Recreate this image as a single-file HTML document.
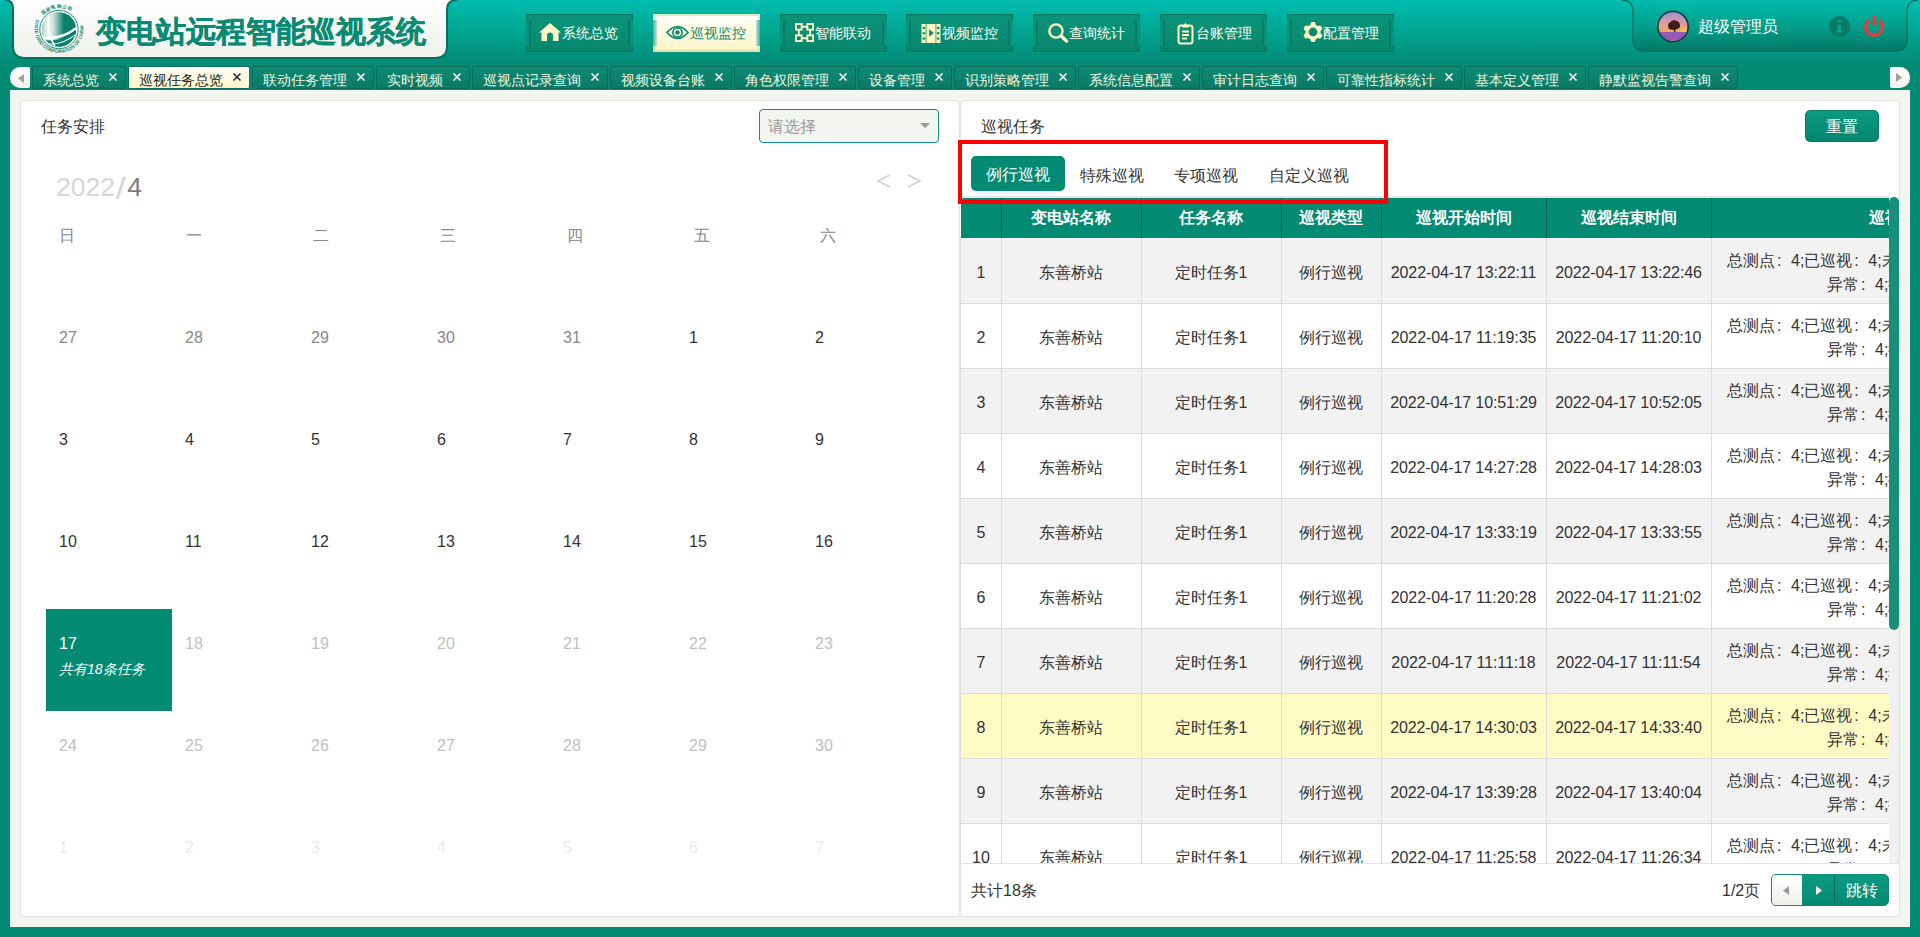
<!DOCTYPE html>
<html><head><meta charset="utf-8">
<style>
*{box-sizing:border-box;margin:0;padding:0}
html,body{width:1920px;height:937px;overflow:hidden}
body{position:relative;background:#038a72;font-family:"Liberation Sans",sans-serif;color:#333}
.abs{position:absolute}
.cl{display:inline-block;width:16px;font-weight:normal;padding-left:2px}
#hdr{left:0;top:0;width:1920px;height:66px;background:linear-gradient(#00bdb0 0px,#00a792 30px,#048b74 64px)}
.nb{position:absolute;top:14px;width:107px;height:38px;background:linear-gradient(#0a9479,#07876d);border:1px solid #087a64;box-shadow:inset 0 0 2px rgba(0,90,70,.5);color:#fffef2;font-size:14px;line-height:36px;white-space:nowrap}
.nb.on{background:linear-gradient(#fffffa,#fff5c6);border-color:#d8e8c8;color:#0b8a70}
.nb::before,.nb::after{content:"";position:absolute;top:5px;bottom:5px;width:3px}
.nb::before{left:-1px;border-right:2px solid rgba(0,90,70,.35);background:#0a9179}
.nb::after{right:-1px;border-left:2px solid rgba(0,90,70,.35);background:#0a9179}
.nb.on::before{background:linear-gradient(to right,#4fae9a,#bfe2d2);border:none;width:4px}
.nb.on::after{background:linear-gradient(to left,#4fae9a,#bfe2d2);border:none;width:4px}
.nb svg{position:absolute}
.nb span{position:absolute}
.tab{position:absolute;top:66px;height:23px;background:linear-gradient(#0d8a73,#0a7a65);border:1px solid #086c59;border-radius:2px;color:#eef6e2;font-size:14px;line-height:26px;padding-left:10px;white-space:nowrap}
.tab.on{background:linear-gradient(#fffff4,#fff6c8);border-color:#0b6e5c;color:#222}
.tab i{position:absolute;right:8px;top:6px;line-height:0;color:#fff}
.tab.on i{color:#223}
#content{left:10px;top:90px;width:1900px;height:837px;background:#f3f5f0}
.panel{position:absolute;background:#fff;border:1px solid #e2e2e2;border-radius:4px}
</style></head><body>
<div id="hdr" class="abs"></div>
<!-- logo panel -->
<svg class="abs" style="left:0;top:0" width="470" height="62" viewBox="0 0 470 62">
<defs><linearGradient id="lg" x1="0" y1="0" x2="0" y2="1"><stop offset="0" stop-color="#ffffff"/><stop offset="1" stop-color="#eef1ec"/></linearGradient>
<linearGradient id="hl" x1="0" y1="0" x2="1" y2="0"><stop offset="0" stop-color="#b0c8c0"/><stop offset="0.2" stop-color="#eef4f1"/><stop offset="0.32" stop-color="#d8e4e0"/><stop offset="0.6" stop-color="#07806c"/><stop offset="1" stop-color="#07806c"/></linearGradient></defs>
<path d="M5,0 Q13,0 13,9 L13,46 Q13,58 25,58 L435,58 Q447,58 447,46 L447,10 Q447,0 457,0 Z" fill="url(#lg)"/><path d="M5,0 Q13,0 13,9 L13,46 Q13,58 25,58 L435,58 Q447,58 447,46 L447,10 Q447,0 457,0" fill="none" stroke="#06705c" stroke-width="2"/>
<path id="rb" d="M36.3,19.3 A24.5,24.5 0 1 0 81.7,19.3" fill="none"/>
<path id="rt" d="M42.5,15.7 A21.5,21.5 0 0 1 75.5,15.7" fill="none"/>
<text font-family="Liberation Sans, sans-serif" font-size="4.8" font-weight="bold" fill="#0e8a74" letter-spacing="0"><textPath href="#rb" startOffset="0">STATE GRID CORPORATION OF CHINA</textPath></text>
<text font-family="Liberation Sans, sans-serif" font-size="4.6" font-weight="bold" fill="#0e8a74" letter-spacing="0.3"><textPath href="#rt" startOffset="0.5">国家电网公司</textPath></text>
<circle cx="59" cy="29.5" r="19.2" fill="none" stroke="#10876f" stroke-width="0.9"/>
<clipPath id="gc"><circle cx="59" cy="29.5" r="17"/></clipPath>
<g clip-path="url(#gc)">
<rect x="40" y="10" width="40" height="40" fill="#07806c"/>
<rect x="40" y="10" width="40" height="40" fill="url(#hl)"/>
<path d="M36,36 Q60,43 80,25" stroke="#ffffff" stroke-width="2.4" fill="none"/><path d="M38,38 Q60,46 80,28 L80,50 L38,50 Z" fill="#07806c"/>
<path d="M50,10 Q44,30 57,50" stroke="#ffffff" stroke-width="1.5" fill="none"/>
<path d="M40,42 Q60,49 80,31" stroke="#ffffff" stroke-width="1.1" fill="none"/>
</g>
<text x="96" y="41.5" font-family="Liberation Sans, sans-serif" font-size="30" font-weight="bold" fill="#0b8a72" stroke="#0b8a72" stroke-width="0.4">变电站远程智能巡视系统</text>
</svg>
<!-- user panel -->
<svg class="abs" style="left:1615px;top:0" width="305" height="56" viewBox="0 0 305 56">
<defs><linearGradient id="ug" x1="0" y1="0" x2="0" y2="1"><stop offset="0" stop-color="#00bbad"/><stop offset="0.5" stop-color="#02a08c"/><stop offset="1" stop-color="#047a66"/></linearGradient></defs>
<path d="M7,0 Q18,0 18,12 L18,40 Q18,51 29,51 L281,51 Q292,51 292,40 L292,12 Q292,0 303,0 Z" fill="url(#ug)"/><path d="M7,0 Q18,0 18,12 L18,40 Q18,51 29,51 L281,51 Q292,51 292,40 L292,12 Q292,0 303,0" fill="none" stroke="#067560" stroke-width="1.5"/>
</svg>
<!-- user -->
<svg class="abs" style="left:1656px;top:9px" width="34" height="34" viewBox="0 0 34 34">
<defs><linearGradient id="sky" x1="0" y1="0" x2="0" y2="1"><stop offset="0" stop-color="#8a8ccc"/><stop offset="0.3" stop-color="#c898b8"/><stop offset="0.5" stop-color="#e8a088"/><stop offset="0.68" stop-color="#f2a860"/></linearGradient><radialGradient id="sun"><stop offset="0" stop-color="#ffd84a"/><stop offset="1" stop-color="#f5b050" stop-opacity="0"/></radialGradient><clipPath id="cc"><circle cx="17" cy="17.5" r="14.3"/></clipPath></defs>
<circle cx="17" cy="17.5" r="16" fill="#163c46"/>
<g clip-path="url(#cc)"><rect x="0" y="0" width="34" height="34" fill="url(#sky)"/><ellipse cx="29" cy="22" rx="9" ry="5" fill="url(#sun)"/><path d="M12.5,19 Q11,14.5 14.5,13 Q16,10.5 19.5,11.5 Q23.5,12 24,16 Q24.5,19.5 21,20 Q18,21.5 15.5,20.5 Q13,20.5 12.5,19 Z" fill="#3e1e1a"/><rect x="18" y="19.5" width="1.4" height="4" fill="#3e1e1a"/><rect x="0" y="23" width="34" height="11" fill="#9858b8"/></g>
</svg>
<div class="abs" style="left:1698px;top:17px;font-size:16px;line-height:20px;color:#fff;white-space:nowrap">超级管理员</div>
<svg class="abs" style="left:1829px;top:16px" width="21" height="21" viewBox="0 0 21 21"><circle cx="10.5" cy="10.5" r="10.5" fill="#0a7a68"/><circle cx="10.5" cy="5.5" r="1.8" fill="#02a58e"/><path d="M8,9 H12 V15 H13.5 V16.5 H7.5 V15 H9 V10.5 H8 Z" fill="#02a58e"/></svg>
<svg class="abs" style="left:1863px;top:15px" width="22" height="22" viewBox="0 0 22 22"><path d="M6.2,5.2 A8.3,8.3 0 1 0 15.8,5.2" fill="none" stroke="#f0363c" stroke-width="3.2"/><path d="M11,1.5 V9.5" stroke="#f0363c" stroke-width="3" stroke-linecap="round"/></svg>
<!-- nav -->
<div class="nb" style="left:526px"><svg style="left:12px;top:8px" width="22" height="19" viewBox="0 0 22 19"><path d="M11,0 L22,9.5 L19.5,9.5 L19.5,18 L14,18 L14,12.5 A3,3 0 0 0 8,12.5 L8,18 L2.5,18 L2.5,9.5 L0,9.5 Z" fill="#fff8c4"/></svg><span style="left:35px">系统总览</span></div>
<div class="nb on" style="left:653px"><svg style="left:12px;top:9px" width="23" height="17" viewBox="0 0 23 17"><path d="M1,8.5 Q11.5,-3.5 22,8.5 Q11.5,20.5 1,8.5 Z" fill="none" stroke="#0b8a70" stroke-width="1.7"/><circle cx="11.5" cy="8.5" r="4.6" fill="none" stroke="#0b8a70" stroke-width="1.7"/><circle cx="11.5" cy="8.5" r="2.3" fill="#0b8a70"/></svg><span style="left:36px">巡视监控</span></div>
<div class="nb" style="left:780px"><svg style="left:14px;top:8px" width="19" height="19" viewBox="0 0 20 20"><g fill="none" stroke="#fff8c4" stroke-width="2"><rect x="1" y="1" width="6" height="6"/><rect x="13" y="1" width="6" height="6"/><rect x="1" y="13" width="6" height="6"/><rect x="13" y="13" width="6" height="6"/><path d="M7,4 H13 M7,16 H13 M4,7 V13 M16,7 V13"/></g></svg><span style="left:34px">智能联动</span></div>
<div class="nb" style="left:906px"><svg style="left:14px;top:9px" width="20" height="19" viewBox="0 0 20 20"><path d="M0,0 H20 V20 H0 Z" fill="#fff8c4"/><g fill="#0a8c72"><rect x="1.2" y="3" width="2.6" height="2.2"/><rect x="1.2" y="8.6" width="2.6" height="2.2"/><rect x="1.2" y="14.2" width="2.6" height="2.2"/><rect x="16.2" y="3" width="2.6" height="2.2"/><rect x="16.2" y="8.6" width="2.6" height="2.2"/><rect x="16.2" y="14.2" width="2.6" height="2.2"/><rect x="4.4" y="0" width="0.8" height="20"/><rect x="14.8" y="0" width="0.8" height="20"/><path d="M8,5.5 L13,9.5 L8,13.5 Z"/></g></svg><span style="left:35px">视频监控</span></div>
<div class="nb" style="left:1033px"><svg style="left:14px;top:8px" width="21" height="20" viewBox="0 0 21 20"><circle cx="8" cy="8" r="6.6" fill="none" stroke="#fff8c4" stroke-width="2.4"/><path d="M12.8,12.8 L18.5,18" stroke="#fff8c4" stroke-width="3.4" stroke-linecap="round"/></svg><span style="left:35px">查询统计</span></div>
<div class="nb" style="left:1160px"><svg style="left:16px;top:7px" width="17" height="23" viewBox="0 0 17 23"><rect x="1.5" y="3.5" width="14" height="18" rx="2.5" fill="none" stroke="#fff8c4" stroke-width="2"/><path d="M5,5.5 L6,3 H7 L8.5,0.5 L10,3 H11 L12,5.5 Z" fill="#fff8c4"/><path d="M5,9.5 H12 M5,13 H12 M5,16.5 H10" stroke="#fff8c4" stroke-width="1.8"/></svg><span style="left:35px">台账管理</span></div>
<div class="nb" style="left:1287px"><svg style="left:15px;top:7px" width="20" height="20" viewBox="0 0 21 21"><g fill="#fff8c4"><circle cx="10.5" cy="10.5" r="8"/><rect x="7.8" y="0" width="5.4" height="21" rx="2"/><rect x="7.8" y="0" width="5.4" height="21" rx="2" transform="rotate(60 10.5 10.5)"/><rect x="7.8" y="0" width="5.4" height="21" rx="2" transform="rotate(120 10.5 10.5)"/></g><circle cx="10.5" cy="10.5" r="4.6" fill="#0a8c72"/></svg><span style="left:35px">配置管理</span></div>
<div class="tab" style="left:32px;width:94px">系统总览<i><svg width="8" height="8" viewBox="0 0 8 8"><path d="M0.5,0.5 L7.5,7.5 M7.5,0.5 L0.5,7.5" stroke="currentColor" stroke-width="1.5"/></svg></i></div>
<div class="tab on" style="left:128px;width:122px">巡视任务总览<i><svg width="8" height="8" viewBox="0 0 8 8"><path d="M0.5,0.5 L7.5,7.5 M7.5,0.5 L0.5,7.5" stroke="currentColor" stroke-width="1.5"/></svg></i></div>
<div class="tab" style="left:252px;width:122px">联动任务管理<i><svg width="8" height="8" viewBox="0 0 8 8"><path d="M0.5,0.5 L7.5,7.5 M7.5,0.5 L0.5,7.5" stroke="currentColor" stroke-width="1.5"/></svg></i></div>
<div class="tab" style="left:376px;width:94px">实时视频<i><svg width="8" height="8" viewBox="0 0 8 8"><path d="M0.5,0.5 L7.5,7.5 M7.5,0.5 L0.5,7.5" stroke="currentColor" stroke-width="1.5"/></svg></i></div>
<div class="tab" style="left:472px;width:136px">巡视点记录查询<i><svg width="8" height="8" viewBox="0 0 8 8"><path d="M0.5,0.5 L7.5,7.5 M7.5,0.5 L0.5,7.5" stroke="currentColor" stroke-width="1.5"/></svg></i></div>
<div class="tab" style="left:610px;width:122px">视频设备台账<i><svg width="8" height="8" viewBox="0 0 8 8"><path d="M0.5,0.5 L7.5,7.5 M7.5,0.5 L0.5,7.5" stroke="currentColor" stroke-width="1.5"/></svg></i></div>
<div class="tab" style="left:734px;width:122px">角色权限管理<i><svg width="8" height="8" viewBox="0 0 8 8"><path d="M0.5,0.5 L7.5,7.5 M7.5,0.5 L0.5,7.5" stroke="currentColor" stroke-width="1.5"/></svg></i></div>
<div class="tab" style="left:858px;width:94px">设备管理<i><svg width="8" height="8" viewBox="0 0 8 8"><path d="M0.5,0.5 L7.5,7.5 M7.5,0.5 L0.5,7.5" stroke="currentColor" stroke-width="1.5"/></svg></i></div>
<div class="tab" style="left:954px;width:122px">识别策略管理<i><svg width="8" height="8" viewBox="0 0 8 8"><path d="M0.5,0.5 L7.5,7.5 M7.5,0.5 L0.5,7.5" stroke="currentColor" stroke-width="1.5"/></svg></i></div>
<div class="tab" style="left:1078px;width:122px">系统信息配置<i><svg width="8" height="8" viewBox="0 0 8 8"><path d="M0.5,0.5 L7.5,7.5 M7.5,0.5 L0.5,7.5" stroke="currentColor" stroke-width="1.5"/></svg></i></div>
<div class="tab" style="left:1202px;width:122px">审计日志查询<i><svg width="8" height="8" viewBox="0 0 8 8"><path d="M0.5,0.5 L7.5,7.5 M7.5,0.5 L0.5,7.5" stroke="currentColor" stroke-width="1.5"/></svg></i></div>
<div class="tab" style="left:1326px;width:136px">可靠性指标统计<i><svg width="8" height="8" viewBox="0 0 8 8"><path d="M0.5,0.5 L7.5,7.5 M7.5,0.5 L0.5,7.5" stroke="currentColor" stroke-width="1.5"/></svg></i></div>
<div class="tab" style="left:1464px;width:122px">基本定义管理<i><svg width="8" height="8" viewBox="0 0 8 8"><path d="M0.5,0.5 L7.5,7.5 M7.5,0.5 L0.5,7.5" stroke="currentColor" stroke-width="1.5"/></svg></i></div>
<div class="tab" style="left:1588px;width:150px">静默监视告警查询<i><svg width="8" height="8" viewBox="0 0 8 8"><path d="M0.5,0.5 L7.5,7.5 M7.5,0.5 L0.5,7.5" stroke="currentColor" stroke-width="1.5"/></svg></i></div>
<div class="abs" style="left:10px;top:67px;width:20px;height:21px;background:linear-gradient(#ffffff,#f0f1ec);border-radius:10px 2px 2px 10px"><svg class="abs" style="left:7.5px;top:6.5px" width="6" height="9"><path d="M6,0 V9 L0,4.5 Z" fill="#a0a0a0"/></svg></div>
<div class="abs" style="left:1890px;top:67px;width:20px;height:21px;background:linear-gradient(#ffffff,#f0f1ec);border-radius:2px 10px 10px 2px"><svg class="abs" style="left:6px;top:6px" width="6" height="9"><path d="M0,0 V9 L6,4.5 Z" fill="#a0a0a0"/></svg></div>
<div id="content" class="abs"></div>
<div class="panel" style="left:20px;top:100px;width:940px;height:817px"></div>
<div class="panel" style="left:960px;top:100px;width:940px;height:817px"></div>
<div class="abs" style="left:41px;top:117px;font-size:16px;line-height:20px;color:#333">任务安排</div>
<div class="abs" style="left:759px;top:109px;width:180px;height:34px;border:1.5px solid #10907a;border-radius:4px;background:#f3f5f0"><span class="abs" style="left:8px;top:7px;font-size:16px;line-height:20px;color:#999">请选择</span><svg class="abs" style="left:160px;top:13px" width="10" height="6"><path d="M0,0 H10 L5,5 Z" fill="#999"/></svg></div>
<div class="abs" style="left:56px;top:170px;font-size:26.5px;line-height:34px;color:#d6d6d6;white-space:nowrap">2022<span style="display:inline-block;margin:0 3px 0 2px;transform:translateY(2.5px) scale(1.4,1.1);transform-origin:50% 60%">/</span><span style="color:#7d7d7d">4</span></div>
<svg class="abs" style="left:876px;top:174px" width="48" height="15"><path d="M14,1 L2,7 L14,13" fill="none" stroke="#d0d0d0" stroke-width="1.6"/><path d="M32,1 L44,7 L32,13" fill="none" stroke="#d0d0d0" stroke-width="1.6"/></svg>
<div class="abs" style="left:47.0px;width:40px;text-align:center;top:226px;font-size:16px;line-height:20px;color:#888">日</div>
<div class="abs" style="left:173.9px;width:40px;text-align:center;top:226px;font-size:16px;line-height:20px;color:#888">一</div>
<div class="abs" style="left:300.8px;width:40px;text-align:center;top:226px;font-size:16px;line-height:20px;color:#888">二</div>
<div class="abs" style="left:427.7px;width:40px;text-align:center;top:226px;font-size:16px;line-height:20px;color:#888">三</div>
<div class="abs" style="left:554.6px;width:40px;text-align:center;top:226px;font-size:16px;line-height:20px;color:#888">四</div>
<div class="abs" style="left:681.5px;width:40px;text-align:center;top:226px;font-size:16px;line-height:20px;color:#888">五</div>
<div class="abs" style="left:808.4px;width:40px;text-align:center;top:226px;font-size:16px;line-height:20px;color:#888">六</div>
<div class="abs" style="left:46px;top:609px;width:126px;height:102px;background:#038a72"></div>
<div class="abs" style="left:59px;top:328px;font-size:16px;line-height:20px;color:#888">27</div>
<div class="abs" style="left:185px;top:328px;font-size:16px;line-height:20px;color:#888">28</div>
<div class="abs" style="left:311px;top:328px;font-size:16px;line-height:20px;color:#888">29</div>
<div class="abs" style="left:437px;top:328px;font-size:16px;line-height:20px;color:#888">30</div>
<div class="abs" style="left:563px;top:328px;font-size:16px;line-height:20px;color:#888">31</div>
<div class="abs" style="left:689px;top:328px;font-size:16px;line-height:20px;color:#333">1</div>
<div class="abs" style="left:815px;top:328px;font-size:16px;line-height:20px;color:#333">2</div>
<div class="abs" style="left:59px;top:430px;font-size:16px;line-height:20px;color:#333">3</div>
<div class="abs" style="left:185px;top:430px;font-size:16px;line-height:20px;color:#333">4</div>
<div class="abs" style="left:311px;top:430px;font-size:16px;line-height:20px;color:#333">5</div>
<div class="abs" style="left:437px;top:430px;font-size:16px;line-height:20px;color:#333">6</div>
<div class="abs" style="left:563px;top:430px;font-size:16px;line-height:20px;color:#333">7</div>
<div class="abs" style="left:689px;top:430px;font-size:16px;line-height:20px;color:#333">8</div>
<div class="abs" style="left:815px;top:430px;font-size:16px;line-height:20px;color:#333">9</div>
<div class="abs" style="left:59px;top:532px;font-size:16px;line-height:20px;color:#333">10</div>
<div class="abs" style="left:185px;top:532px;font-size:16px;line-height:20px;color:#333">11</div>
<div class="abs" style="left:311px;top:532px;font-size:16px;line-height:20px;color:#333">12</div>
<div class="abs" style="left:437px;top:532px;font-size:16px;line-height:20px;color:#333">13</div>
<div class="abs" style="left:563px;top:532px;font-size:16px;line-height:20px;color:#333">14</div>
<div class="abs" style="left:689px;top:532px;font-size:16px;line-height:20px;color:#333">15</div>
<div class="abs" style="left:815px;top:532px;font-size:16px;line-height:20px;color:#333">16</div>
<div class="abs" style="left:59px;top:634px;font-size:16px;line-height:20px;color:#fff">17</div>
<div class="abs" style="left:185px;top:634px;font-size:16px;line-height:20px;color:#c0c0c0">18</div>
<div class="abs" style="left:311px;top:634px;font-size:16px;line-height:20px;color:#c0c0c0">19</div>
<div class="abs" style="left:437px;top:634px;font-size:16px;line-height:20px;color:#c0c0c0">20</div>
<div class="abs" style="left:563px;top:634px;font-size:16px;line-height:20px;color:#c0c0c0">21</div>
<div class="abs" style="left:689px;top:634px;font-size:16px;line-height:20px;color:#c0c0c0">22</div>
<div class="abs" style="left:815px;top:634px;font-size:16px;line-height:20px;color:#c0c0c0">23</div>
<div class="abs" style="left:59px;top:736px;font-size:16px;line-height:20px;color:#c0c0c0">24</div>
<div class="abs" style="left:185px;top:736px;font-size:16px;line-height:20px;color:#c0c0c0">25</div>
<div class="abs" style="left:311px;top:736px;font-size:16px;line-height:20px;color:#c0c0c0">26</div>
<div class="abs" style="left:437px;top:736px;font-size:16px;line-height:20px;color:#c0c0c0">27</div>
<div class="abs" style="left:563px;top:736px;font-size:16px;line-height:20px;color:#c0c0c0">28</div>
<div class="abs" style="left:689px;top:736px;font-size:16px;line-height:20px;color:#c0c0c0">29</div>
<div class="abs" style="left:815px;top:736px;font-size:16px;line-height:20px;color:#c0c0c0">30</div>
<div class="abs" style="left:59px;top:838px;font-size:16px;line-height:20px;color:#ececec">1</div>
<div class="abs" style="left:185px;top:838px;font-size:16px;line-height:20px;color:#ececec">2</div>
<div class="abs" style="left:311px;top:838px;font-size:16px;line-height:20px;color:#ececec">3</div>
<div class="abs" style="left:437px;top:838px;font-size:16px;line-height:20px;color:#ececec">4</div>
<div class="abs" style="left:563px;top:838px;font-size:16px;line-height:20px;color:#ececec">5</div>
<div class="abs" style="left:689px;top:838px;font-size:16px;line-height:20px;color:#ececec">6</div>
<div class="abs" style="left:815px;top:838px;font-size:16px;line-height:20px;color:#ececec">7</div>
<div class="abs" style="left:59px;top:659px;font-size:14px;line-height:20px;color:#fff;font-style:italic;white-space:nowrap">共有18条任务</div>
<div class="abs" style="left:981px;top:117px;font-size:16px;line-height:20px;color:#333">巡视任务</div>
<div class="abs" style="left:1805px;top:110px;width:74px;height:32px;border-radius:5px;background:linear-gradient(#0a9a80,#058570);border:1px solid #067c66;color:#fff;font-size:16px;line-height:32px;text-align:center">重置</div>
<div class="abs" style="left:971px;top:156px;width:94px;height:35px;border-radius:5px;background:#038a72;color:#fff;font-size:16px;line-height:38px;text-align:center">例行巡视</div>
<div class="abs" style="left:1080px;top:165px;font-size:16px;line-height:22px;color:#333;white-space:nowrap">特殊巡视</div>
<div class="abs" style="left:1174px;top:165px;font-size:16px;line-height:22px;color:#333;white-space:nowrap">专项巡视</div>
<div class="abs" style="left:1269px;top:165px;font-size:16px;line-height:22px;color:#333;white-space:nowrap">自定义巡视</div>
<div class="abs" style="left:960px;top:196px;width:929px;height:667px;overflow:hidden;background:#fff">
<div class="abs" style="left:0;top:0;width:929px;height:2px;background:#e6e6ea"></div>
<div class="abs" style="left:1px;top:2px;width:1200px;height:40px;background:#038a72;border-top-left-radius:3px"></div>
<div class="abs" style="left:1px;top:2px;width:40px;height:40px;line-height:40px;text-align:center;color:#fff;font-weight:bold;font-size:16px"></div>
<div class="abs" style="left:41px;top:2px;width:1px;height:40px;background:#0a5e4e"></div>
<div class="abs" style="left:41px;top:2px;width:140px;height:40px;line-height:40px;text-align:center;color:#fff;font-weight:bold;font-size:16px">变电站名称</div>
<div class="abs" style="left:181px;top:2px;width:1px;height:40px;background:#0a5e4e"></div>
<div class="abs" style="left:181px;top:2px;width:140px;height:40px;line-height:40px;text-align:center;color:#fff;font-weight:bold;font-size:16px">任务名称</div>
<div class="abs" style="left:321px;top:2px;width:1px;height:40px;background:#0a5e4e"></div>
<div class="abs" style="left:321px;top:2px;width:100px;height:40px;line-height:40px;text-align:center;color:#fff;font-weight:bold;font-size:16px">巡视类型</div>
<div class="abs" style="left:421px;top:2px;width:1px;height:40px;background:#0a5e4e"></div>
<div class="abs" style="left:421px;top:2px;width:165px;height:40px;line-height:40px;text-align:center;color:#fff;font-weight:bold;font-size:16px">巡视开始时间</div>
<div class="abs" style="left:586px;top:2px;width:1px;height:40px;background:#0a5e4e"></div>
<div class="abs" style="left:586px;top:2px;width:165px;height:40px;line-height:40px;text-align:center;color:#fff;font-weight:bold;font-size:16px">巡视结束时间</div>
<div class="abs" style="left:751px;top:2px;width:1px;height:40px;background:#0a5e4e"></div>
<div class="abs" style="left:751px;top:2px;width:380px;height:40px;line-height:40px;text-align:center;color:#fff;font-weight:bold;font-size:16px">巡视结果</div>
<div class="abs" style="left:1px;top:42px;width:1200px;height:65px;background:#f2f2f2"></div>
<div class="abs" style="left:1px;top:44px;width:40px;height:65px;line-height:65px;text-align:center;font-size:16px;color:#333;white-space:nowrap">1</div>
<div class="abs" style="left:41px;top:44px;width:140px;height:65px;line-height:65px;text-align:center;font-size:16px;color:#333;white-space:nowrap">东善桥站</div>
<div class="abs" style="left:181px;top:44px;width:140px;height:65px;line-height:65px;text-align:center;font-size:16px;color:#333;white-space:nowrap">定时任务1</div>
<div class="abs" style="left:321px;top:44px;width:100px;height:65px;line-height:65px;text-align:center;font-size:16px;color:#333;white-space:nowrap">例行巡视</div>
<div class="abs" style="left:421px;top:44px;width:165px;height:65px;line-height:65px;text-align:center;font-size:16px;color:#333;white-space:nowrap;letter-spacing:-0.1px">2022-04-17 13:22:11</div>
<div class="abs" style="left:586px;top:44px;width:165px;height:65px;line-height:65px;text-align:center;font-size:16px;color:#333;white-space:nowrap;letter-spacing:-0.1px">2022-04-17 13:22:46</div>
<div class="abs" style="left:767px;top:53px;font-size:16px;line-height:24px;color:#333;white-space:nowrap">总测点<b class="cl">:</b>4;已巡视<b class="cl">:</b>4;未巡视<b class="cl">:</b>0;正常<b class="cl">:</b>0;</div>
<div class="abs" style="left:867px;top:77px;font-size:16px;line-height:24px;color:#333;white-space:nowrap">异常<b class="cl">:</b>4;待确认<b class="cl">:</b>0;</div>
<div class="abs" style="left:1px;top:107px;width:1200px;height:65px;background:#ffffff"></div>
<div class="abs" style="left:1px;top:109px;width:40px;height:65px;line-height:65px;text-align:center;font-size:16px;color:#333;white-space:nowrap">2</div>
<div class="abs" style="left:41px;top:109px;width:140px;height:65px;line-height:65px;text-align:center;font-size:16px;color:#333;white-space:nowrap">东善桥站</div>
<div class="abs" style="left:181px;top:109px;width:140px;height:65px;line-height:65px;text-align:center;font-size:16px;color:#333;white-space:nowrap">定时任务1</div>
<div class="abs" style="left:321px;top:109px;width:100px;height:65px;line-height:65px;text-align:center;font-size:16px;color:#333;white-space:nowrap">例行巡视</div>
<div class="abs" style="left:421px;top:109px;width:165px;height:65px;line-height:65px;text-align:center;font-size:16px;color:#333;white-space:nowrap;letter-spacing:-0.1px">2022-04-17 11:19:35</div>
<div class="abs" style="left:586px;top:109px;width:165px;height:65px;line-height:65px;text-align:center;font-size:16px;color:#333;white-space:nowrap;letter-spacing:-0.1px">2022-04-17 11:20:10</div>
<div class="abs" style="left:767px;top:118px;font-size:16px;line-height:24px;color:#333;white-space:nowrap">总测点<b class="cl">:</b>4;已巡视<b class="cl">:</b>4;未巡视<b class="cl">:</b>0;正常<b class="cl">:</b>0;</div>
<div class="abs" style="left:867px;top:142px;font-size:16px;line-height:24px;color:#333;white-space:nowrap">异常<b class="cl">:</b>4;待确认<b class="cl">:</b>0;</div>
<div class="abs" style="left:1px;top:172px;width:1200px;height:65px;background:#f2f2f2"></div>
<div class="abs" style="left:1px;top:174px;width:40px;height:65px;line-height:65px;text-align:center;font-size:16px;color:#333;white-space:nowrap">3</div>
<div class="abs" style="left:41px;top:174px;width:140px;height:65px;line-height:65px;text-align:center;font-size:16px;color:#333;white-space:nowrap">东善桥站</div>
<div class="abs" style="left:181px;top:174px;width:140px;height:65px;line-height:65px;text-align:center;font-size:16px;color:#333;white-space:nowrap">定时任务1</div>
<div class="abs" style="left:321px;top:174px;width:100px;height:65px;line-height:65px;text-align:center;font-size:16px;color:#333;white-space:nowrap">例行巡视</div>
<div class="abs" style="left:421px;top:174px;width:165px;height:65px;line-height:65px;text-align:center;font-size:16px;color:#333;white-space:nowrap;letter-spacing:-0.1px">2022-04-17 10:51:29</div>
<div class="abs" style="left:586px;top:174px;width:165px;height:65px;line-height:65px;text-align:center;font-size:16px;color:#333;white-space:nowrap;letter-spacing:-0.1px">2022-04-17 10:52:05</div>
<div class="abs" style="left:767px;top:183px;font-size:16px;line-height:24px;color:#333;white-space:nowrap">总测点<b class="cl">:</b>4;已巡视<b class="cl">:</b>4;未巡视<b class="cl">:</b>0;正常<b class="cl">:</b>0;</div>
<div class="abs" style="left:867px;top:207px;font-size:16px;line-height:24px;color:#333;white-space:nowrap">异常<b class="cl">:</b>4;待确认<b class="cl">:</b>0;</div>
<div class="abs" style="left:1px;top:237px;width:1200px;height:65px;background:#ffffff"></div>
<div class="abs" style="left:1px;top:239px;width:40px;height:65px;line-height:65px;text-align:center;font-size:16px;color:#333;white-space:nowrap">4</div>
<div class="abs" style="left:41px;top:239px;width:140px;height:65px;line-height:65px;text-align:center;font-size:16px;color:#333;white-space:nowrap">东善桥站</div>
<div class="abs" style="left:181px;top:239px;width:140px;height:65px;line-height:65px;text-align:center;font-size:16px;color:#333;white-space:nowrap">定时任务1</div>
<div class="abs" style="left:321px;top:239px;width:100px;height:65px;line-height:65px;text-align:center;font-size:16px;color:#333;white-space:nowrap">例行巡视</div>
<div class="abs" style="left:421px;top:239px;width:165px;height:65px;line-height:65px;text-align:center;font-size:16px;color:#333;white-space:nowrap;letter-spacing:-0.1px">2022-04-17 14:27:28</div>
<div class="abs" style="left:586px;top:239px;width:165px;height:65px;line-height:65px;text-align:center;font-size:16px;color:#333;white-space:nowrap;letter-spacing:-0.1px">2022-04-17 14:28:03</div>
<div class="abs" style="left:767px;top:248px;font-size:16px;line-height:24px;color:#333;white-space:nowrap">总测点<b class="cl">:</b>4;已巡视<b class="cl">:</b>4;未巡视<b class="cl">:</b>0;正常<b class="cl">:</b>0;</div>
<div class="abs" style="left:867px;top:272px;font-size:16px;line-height:24px;color:#333;white-space:nowrap">异常<b class="cl">:</b>4;待确认<b class="cl">:</b>0;</div>
<div class="abs" style="left:1px;top:302px;width:1200px;height:65px;background:#f2f2f2"></div>
<div class="abs" style="left:1px;top:304px;width:40px;height:65px;line-height:65px;text-align:center;font-size:16px;color:#333;white-space:nowrap">5</div>
<div class="abs" style="left:41px;top:304px;width:140px;height:65px;line-height:65px;text-align:center;font-size:16px;color:#333;white-space:nowrap">东善桥站</div>
<div class="abs" style="left:181px;top:304px;width:140px;height:65px;line-height:65px;text-align:center;font-size:16px;color:#333;white-space:nowrap">定时任务1</div>
<div class="abs" style="left:321px;top:304px;width:100px;height:65px;line-height:65px;text-align:center;font-size:16px;color:#333;white-space:nowrap">例行巡视</div>
<div class="abs" style="left:421px;top:304px;width:165px;height:65px;line-height:65px;text-align:center;font-size:16px;color:#333;white-space:nowrap;letter-spacing:-0.1px">2022-04-17 13:33:19</div>
<div class="abs" style="left:586px;top:304px;width:165px;height:65px;line-height:65px;text-align:center;font-size:16px;color:#333;white-space:nowrap;letter-spacing:-0.1px">2022-04-17 13:33:55</div>
<div class="abs" style="left:767px;top:313px;font-size:16px;line-height:24px;color:#333;white-space:nowrap">总测点<b class="cl">:</b>4;已巡视<b class="cl">:</b>4;未巡视<b class="cl">:</b>0;正常<b class="cl">:</b>0;</div>
<div class="abs" style="left:867px;top:337px;font-size:16px;line-height:24px;color:#333;white-space:nowrap">异常<b class="cl">:</b>4;待确认<b class="cl">:</b>0;</div>
<div class="abs" style="left:1px;top:367px;width:1200px;height:65px;background:#ffffff"></div>
<div class="abs" style="left:1px;top:369px;width:40px;height:65px;line-height:65px;text-align:center;font-size:16px;color:#333;white-space:nowrap">6</div>
<div class="abs" style="left:41px;top:369px;width:140px;height:65px;line-height:65px;text-align:center;font-size:16px;color:#333;white-space:nowrap">东善桥站</div>
<div class="abs" style="left:181px;top:369px;width:140px;height:65px;line-height:65px;text-align:center;font-size:16px;color:#333;white-space:nowrap">定时任务1</div>
<div class="abs" style="left:321px;top:369px;width:100px;height:65px;line-height:65px;text-align:center;font-size:16px;color:#333;white-space:nowrap">例行巡视</div>
<div class="abs" style="left:421px;top:369px;width:165px;height:65px;line-height:65px;text-align:center;font-size:16px;color:#333;white-space:nowrap;letter-spacing:-0.1px">2022-04-17 11:20:28</div>
<div class="abs" style="left:586px;top:369px;width:165px;height:65px;line-height:65px;text-align:center;font-size:16px;color:#333;white-space:nowrap;letter-spacing:-0.1px">2022-04-17 11:21:02</div>
<div class="abs" style="left:767px;top:378px;font-size:16px;line-height:24px;color:#333;white-space:nowrap">总测点<b class="cl">:</b>4;已巡视<b class="cl">:</b>4;未巡视<b class="cl">:</b>0;正常<b class="cl">:</b>0;</div>
<div class="abs" style="left:867px;top:402px;font-size:16px;line-height:24px;color:#333;white-space:nowrap">异常<b class="cl">:</b>4;待确认<b class="cl">:</b>0;</div>
<div class="abs" style="left:1px;top:432px;width:1200px;height:65px;background:#f2f2f2"></div>
<div class="abs" style="left:1px;top:434px;width:40px;height:65px;line-height:65px;text-align:center;font-size:16px;color:#333;white-space:nowrap">7</div>
<div class="abs" style="left:41px;top:434px;width:140px;height:65px;line-height:65px;text-align:center;font-size:16px;color:#333;white-space:nowrap">东善桥站</div>
<div class="abs" style="left:181px;top:434px;width:140px;height:65px;line-height:65px;text-align:center;font-size:16px;color:#333;white-space:nowrap">定时任务1</div>
<div class="abs" style="left:321px;top:434px;width:100px;height:65px;line-height:65px;text-align:center;font-size:16px;color:#333;white-space:nowrap">例行巡视</div>
<div class="abs" style="left:421px;top:434px;width:165px;height:65px;line-height:65px;text-align:center;font-size:16px;color:#333;white-space:nowrap;letter-spacing:-0.1px">2022-04-17 11:11:18</div>
<div class="abs" style="left:586px;top:434px;width:165px;height:65px;line-height:65px;text-align:center;font-size:16px;color:#333;white-space:nowrap;letter-spacing:-0.1px">2022-04-17 11:11:54</div>
<div class="abs" style="left:767px;top:443px;font-size:16px;line-height:24px;color:#333;white-space:nowrap">总测点<b class="cl">:</b>4;已巡视<b class="cl">:</b>4;未巡视<b class="cl">:</b>0;正常<b class="cl">:</b>0;</div>
<div class="abs" style="left:867px;top:467px;font-size:16px;line-height:24px;color:#333;white-space:nowrap">异常<b class="cl">:</b>4;待确认<b class="cl">:</b>0;</div>
<div class="abs" style="left:1px;top:497px;width:1200px;height:65px;background:#fffbc4"></div>
<div class="abs" style="left:1px;top:499px;width:40px;height:65px;line-height:65px;text-align:center;font-size:16px;color:#333;white-space:nowrap">8</div>
<div class="abs" style="left:41px;top:499px;width:140px;height:65px;line-height:65px;text-align:center;font-size:16px;color:#333;white-space:nowrap">东善桥站</div>
<div class="abs" style="left:181px;top:499px;width:140px;height:65px;line-height:65px;text-align:center;font-size:16px;color:#333;white-space:nowrap">定时任务1</div>
<div class="abs" style="left:321px;top:499px;width:100px;height:65px;line-height:65px;text-align:center;font-size:16px;color:#333;white-space:nowrap">例行巡视</div>
<div class="abs" style="left:421px;top:499px;width:165px;height:65px;line-height:65px;text-align:center;font-size:16px;color:#333;white-space:nowrap;letter-spacing:-0.1px">2022-04-17 14:30:03</div>
<div class="abs" style="left:586px;top:499px;width:165px;height:65px;line-height:65px;text-align:center;font-size:16px;color:#333;white-space:nowrap;letter-spacing:-0.1px">2022-04-17 14:33:40</div>
<div class="abs" style="left:767px;top:508px;font-size:16px;line-height:24px;color:#333;white-space:nowrap">总测点<b class="cl">:</b>4;已巡视<b class="cl">:</b>4;未巡视<b class="cl">:</b>0;正常<b class="cl">:</b>0;</div>
<div class="abs" style="left:867px;top:532px;font-size:16px;line-height:24px;color:#333;white-space:nowrap">异常<b class="cl">:</b>4;待确认<b class="cl">:</b>0;</div>
<div class="abs" style="left:1px;top:562px;width:1200px;height:65px;background:#f2f2f2"></div>
<div class="abs" style="left:1px;top:564px;width:40px;height:65px;line-height:65px;text-align:center;font-size:16px;color:#333;white-space:nowrap">9</div>
<div class="abs" style="left:41px;top:564px;width:140px;height:65px;line-height:65px;text-align:center;font-size:16px;color:#333;white-space:nowrap">东善桥站</div>
<div class="abs" style="left:181px;top:564px;width:140px;height:65px;line-height:65px;text-align:center;font-size:16px;color:#333;white-space:nowrap">定时任务1</div>
<div class="abs" style="left:321px;top:564px;width:100px;height:65px;line-height:65px;text-align:center;font-size:16px;color:#333;white-space:nowrap">例行巡视</div>
<div class="abs" style="left:421px;top:564px;width:165px;height:65px;line-height:65px;text-align:center;font-size:16px;color:#333;white-space:nowrap;letter-spacing:-0.1px">2022-04-17 13:39:28</div>
<div class="abs" style="left:586px;top:564px;width:165px;height:65px;line-height:65px;text-align:center;font-size:16px;color:#333;white-space:nowrap;letter-spacing:-0.1px">2022-04-17 13:40:04</div>
<div class="abs" style="left:767px;top:573px;font-size:16px;line-height:24px;color:#333;white-space:nowrap">总测点<b class="cl">:</b>4;已巡视<b class="cl">:</b>4;未巡视<b class="cl">:</b>0;正常<b class="cl">:</b>0;</div>
<div class="abs" style="left:867px;top:597px;font-size:16px;line-height:24px;color:#333;white-space:nowrap">异常<b class="cl">:</b>4;待确认<b class="cl">:</b>0;</div>
<div class="abs" style="left:1px;top:627px;width:1200px;height:65px;background:#ffffff"></div>
<div class="abs" style="left:1px;top:629px;width:40px;height:65px;line-height:65px;text-align:center;font-size:16px;color:#333;white-space:nowrap">10</div>
<div class="abs" style="left:41px;top:629px;width:140px;height:65px;line-height:65px;text-align:center;font-size:16px;color:#333;white-space:nowrap">东善桥站</div>
<div class="abs" style="left:181px;top:629px;width:140px;height:65px;line-height:65px;text-align:center;font-size:16px;color:#333;white-space:nowrap">定时任务1</div>
<div class="abs" style="left:321px;top:629px;width:100px;height:65px;line-height:65px;text-align:center;font-size:16px;color:#333;white-space:nowrap">例行巡视</div>
<div class="abs" style="left:421px;top:629px;width:165px;height:65px;line-height:65px;text-align:center;font-size:16px;color:#333;white-space:nowrap;letter-spacing:-0.1px">2022-04-17 11:25:58</div>
<div class="abs" style="left:586px;top:629px;width:165px;height:65px;line-height:65px;text-align:center;font-size:16px;color:#333;white-space:nowrap;letter-spacing:-0.1px">2022-04-17 11:26:34</div>
<div class="abs" style="left:767px;top:638px;font-size:16px;line-height:24px;color:#333;white-space:nowrap">总测点<b class="cl">:</b>4;已巡视<b class="cl">:</b>4;未巡视<b class="cl">:</b>0;正常<b class="cl">:</b>0;</div>
<div class="abs" style="left:867px;top:662px;font-size:16px;line-height:24px;color:#333;white-space:nowrap">异常<b class="cl">:</b>4;待确认<b class="cl">:</b>0;</div>
<div class="abs" style="left:41px;top:42px;width:1px;height:650px;background:#dcdcdc"></div>
<div class="abs" style="left:181px;top:42px;width:1px;height:650px;background:#dcdcdc"></div>
<div class="abs" style="left:321px;top:42px;width:1px;height:650px;background:#dcdcdc"></div>
<div class="abs" style="left:421px;top:42px;width:1px;height:650px;background:#dcdcdc"></div>
<div class="abs" style="left:586px;top:42px;width:1px;height:650px;background:#dcdcdc"></div>
<div class="abs" style="left:751px;top:42px;width:1px;height:650px;background:#dcdcdc"></div>
<div class="abs" style="left:0;top:42px;width:1px;height:650px;background:#dcdcdc"></div><div class="abs" style="left:1px;top:107px;width:1200px;height:1px;background:#dcdcdc"></div><div class="abs" style="left:1px;top:172px;width:1200px;height:1px;background:#dcdcdc"></div><div class="abs" style="left:1px;top:237px;width:1200px;height:1px;background:#dcdcdc"></div><div class="abs" style="left:1px;top:302px;width:1200px;height:1px;background:#dcdcdc"></div><div class="abs" style="left:1px;top:367px;width:1200px;height:1px;background:#dcdcdc"></div><div class="abs" style="left:1px;top:432px;width:1200px;height:1px;background:#dcdcdc"></div><div class="abs" style="left:1px;top:497px;width:1200px;height:1px;background:#dcdcdc"></div><div class="abs" style="left:1px;top:562px;width:1200px;height:1px;background:#dcdcdc"></div><div class="abs" style="left:1px;top:627px;width:1200px;height:1px;background:#dcdcdc"></div><div class="abs" style="left:1px;top:692px;width:1200px;height:1px;background:#dcdcdc"></div>
</div>
<div class="abs" style="left:958px;top:140px;width:430px;height:64px;border:4px solid #ff0000"></div>
<div class="abs" style="left:1889px;top:197px;width:10px;height:666px;background:#f1f1f4"></div>
<div class="abs" style="left:1889px;top:197px;width:10px;height:433px;background:#16907a;border-radius:5px"></div>
<div class="abs" style="left:961px;top:863px;width:938px;height:1px;background:#e4e4e4"></div>
<div class="abs" style="left:971px;top:881px;font-size:16px;line-height:20px;color:#333">共计18条</div>
<div class="abs" style="left:1722px;top:881px;font-size:16px;line-height:20px;color:#333">1/2页</div>
<div class="abs" style="left:1771px;top:874px;width:118px;height:32px;border-radius:5px;border:1px solid #0f8a73;background:#058d74;overflow:hidden"><div class="abs" style="left:0;top:0;width:30px;height:30px;background:linear-gradient(#ffffff,#eef0ec)"><svg class="abs" style="left:11px;top:11px" width="6" height="9"><path d="M6,0 V9 L0,4.5 Z" fill="#9a9a9a"/></svg></div><div class="abs" style="left:30px;top:0;width:32px;height:30px;background:linear-gradient(#0a9a80,#058a72)"><svg class="abs" style="left:14px;top:11px" width="6" height="9"><path d="M0,0 V9 L6,4.5 Z" fill="#fff"/></svg></div><div class="abs" style="left:62px;top:0;width:1px;height:30px;background:#076a58"></div><div class="abs" style="left:63px;top:0;width:54px;height:30px;background:linear-gradient(#0a9a80,#058a72);color:#fff;font-size:16px;line-height:32px;text-align:center">跳转</div></div>
</body></html>
